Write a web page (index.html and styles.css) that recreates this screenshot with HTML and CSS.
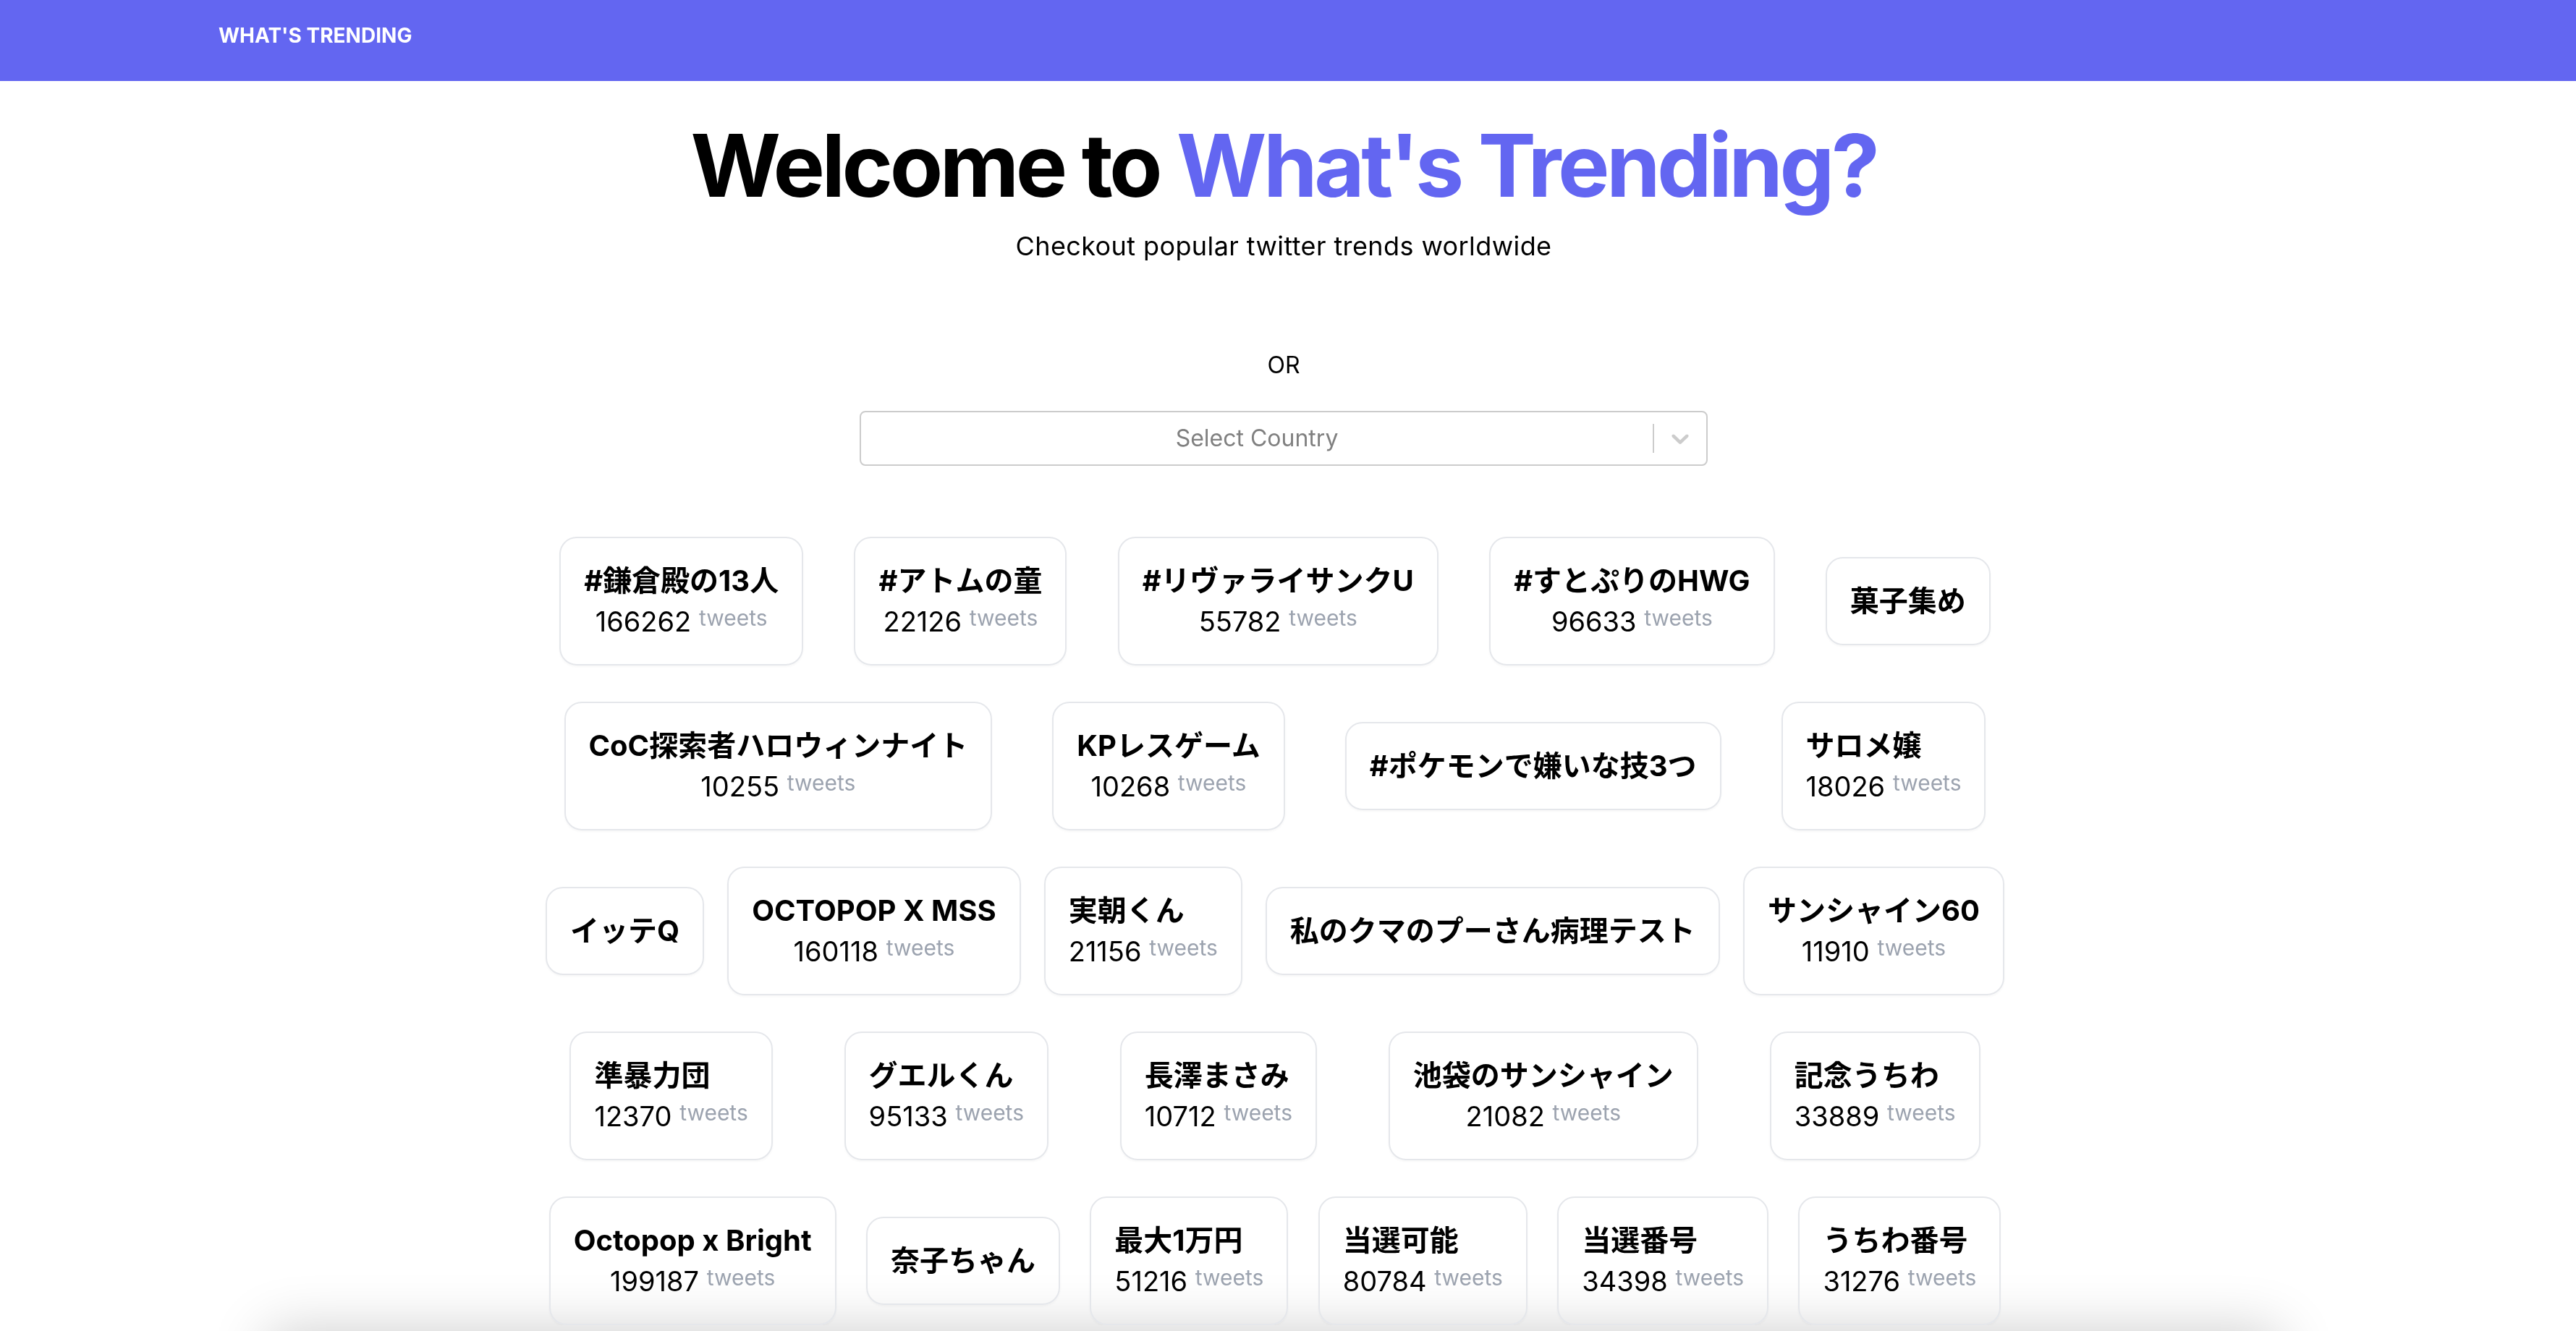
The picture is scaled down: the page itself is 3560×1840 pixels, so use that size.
FILE: index.html
```html
<!DOCTYPE html>
<html lang="ja">
<head>
<meta charset="utf-8">
<title>What's Trending</title>
<link rel="stylesheet" href="styles.css">
</head>
<body>
<header class="topbar">
  <span class="brand">WHAT'S TRENDING</span>
</header>
<main class="main">
  <h1 class="title">Welcome to <span class="accent">What's Trending?</span></h1>
  <p class="subtitle">Checkout popular twitter trends worldwide</p>
  <p class="or">OR</p>
  <div class="select">
    <div class="select-value"><span class="placeholder">Select Country</span></div>
    <div class="select-indicators">
      <span class="sep"></span>
      <span class="chev"><svg viewBox="0 0 20 20" aria-hidden="true"><path d="M4.516 7.548c0.436-0.446 1.043-0.481 1.576 0l3.908 3.747 3.908-3.747c0.533-0.481 1.141-0.446 1.574 0 0.436 0.445 0.408 1.197 0 1.615-0.406 0.418-4.695 4.502-4.695 4.502-0.217 0.223-0.502 0.335-0.787 0.335s-0.57-0.112-0.789-0.335c0 0-4.287-4.084-4.695-4.502s-0.436-1.170 0-1.615z"></path></svg></span>
    </div>
  </div>
  <section class="trends">
    <div class="row">
      <div class="card"><h3 class="card-title">#鎌倉殿の13人</h3><p class="card-count">166262 <span class="card-unit">tweets</span></p></div>
      <div class="card"><h3 class="card-title">#アトムの童</h3><p class="card-count">22126 <span class="card-unit">tweets</span></p></div>
      <div class="card"><h3 class="card-title">#リヴァライサンクU</h3><p class="card-count">55782 <span class="card-unit">tweets</span></p></div>
      <div class="card"><h3 class="card-title">#すとぷりのHWG</h3><p class="card-count">96633 <span class="card-unit">tweets</span></p></div>
      <div class="card"><h3 class="card-title">菓子集め</h3></div>
    </div>
    <div class="row">
      <div class="card"><h3 class="card-title">CoC探索者ハロウィンナイト</h3><p class="card-count">10255 <span class="card-unit">tweets</span></p></div>
      <div class="card"><h3 class="card-title">KPレスゲーム</h3><p class="card-count">10268 <span class="card-unit">tweets</span></p></div>
      <div class="card"><h3 class="card-title">#ポケモンで嫌いな技3つ</h3></div>
      <div class="card"><h3 class="card-title">サロメ嬢</h3><p class="card-count">18026 <span class="card-unit">tweets</span></p></div>
    </div>
    <div class="row">
      <div class="card"><h3 class="card-title">イッテQ</h3></div>
      <div class="card"><h3 class="card-title">OCTOPOP X MSS</h3><p class="card-count">160118 <span class="card-unit">tweets</span></p></div>
      <div class="card"><h3 class="card-title">実朝くん</h3><p class="card-count">21156 <span class="card-unit">tweets</span></p></div>
      <div class="card"><h3 class="card-title">私のクマのプーさん病理テスト</h3></div>
      <div class="card"><h3 class="card-title">サンシャイン60</h3><p class="card-count">11910 <span class="card-unit">tweets</span></p></div>
    </div>
    <div class="row">
      <div class="card"><h3 class="card-title">準暴力団</h3><p class="card-count">12370 <span class="card-unit">tweets</span></p></div>
      <div class="card"><h3 class="card-title">グエルくん</h3><p class="card-count">95133 <span class="card-unit">tweets</span></p></div>
      <div class="card"><h3 class="card-title">長澤まさみ</h3><p class="card-count">10712 <span class="card-unit">tweets</span></p></div>
      <div class="card"><h3 class="card-title">池袋のサンシャイン</h3><p class="card-count">21082 <span class="card-unit">tweets</span></p></div>
      <div class="card"><h3 class="card-title">記念うちわ</h3><p class="card-count">33889 <span class="card-unit">tweets</span></p></div>
    </div>
    <div class="row">
      <div class="card"><h3 class="card-title">Octopop x Bright</h3><p class="card-count">199187 <span class="card-unit">tweets</span></p></div>
      <div class="card"><h3 class="card-title">奈子ちゃん</h3></div>
      <div class="card"><h3 class="card-title">最大1万円</h3><p class="card-count">51216 <span class="card-unit">tweets</span></p></div>
      <div class="card"><h3 class="card-title">当選可能</h3><p class="card-count">80784 <span class="card-unit">tweets</span></p></div>
      <div class="card"><h3 class="card-title">当選番号</h3><p class="card-count">34398 <span class="card-unit">tweets</span></p></div>
      <div class="card"><h3 class="card-title">うちわ番号</h3><p class="card-count">31276 <span class="card-unit">tweets</span></p></div>
    </div>
  </section>
</main>
<div class="fold-shadow"></div>
</body>
</html>
```
FILE: styles.css
```css
html, body {
  margin: 0;
  padding: 0;
}
body {
  background: #ffffff;
  color: #000000;
  font-family: Inter, "Noto Sans CJK JP", sans-serif;
}
.topbar {
  height: 112px;
  box-sizing: border-box;
  background: #6366f1;
  padding: 29px 0 0 302px;
}
.brand {
  display: block;
  color: #ffffff;
  font-weight: 700;
  font-size: 28px;
  line-height: 40px;
}
.main {
  display: flex;
  flex-direction: column;
  align-items: center;
  padding-right: 12px;
}
.title {
  margin: 57px 0 0;
  font-size: 120px;
  line-height: 120px;
  font-weight: 700;
  letter-spacing: -4.5px;
  white-space: nowrap;
}
.accent {
  color: #6366f1;
}
.subtitle {
  margin: 23px 0 0;
  font-size: 36px;
  line-height: 56px;
  letter-spacing: 0.4px;
}
.or {
  margin: 113px 0 0;
  font-size: 32px;
  line-height: 48px;
}
.select {
  margin-top: 39px;
  width: 1172px;
  height: 76px;
  box-sizing: border-box;
  border: 2px solid #cccccc;
  border-radius: 8px;
  display: flex;
  background: #ffffff;
}
.select-value {
  flex: 1;
  display: flex;
  align-items: center;
  justify-content: center;
  padding: 4px 16px;
}
.placeholder {
  color: #808080;
  font-size: 32px;
  line-height: 48px;
}
.select-indicators {
  display: flex;
  align-items: stretch;
}
.sep {
  width: 2px;
  margin: 16px 0;
  background: #cccccc;
}
.chev {
  display: flex;
  align-items: center;
  padding: 16px;
  color: #cccccc;
}
.chev svg {
  width: 40px;
  height: 40px;
  fill: currentColor;
}
.trends {
  width: 2048px;
  margin: 98px 24px 0 0;
  display: flex;
  flex-direction: column;
  gap: 50px;
}
.row {
  display: flex;
  justify-content: space-around;
  align-items: center;
}
.card {
  margin: 0 16px;
  border: 2px solid #e5e7eb;
  border-radius: 24px;
  padding: 31px 32px;
  box-shadow: 0 2px 3px rgba(0, 0, 0, 0.03);
}
.card-title {
  margin: 0;
  font-size: 40px;
  line-height: 56px;
  font-weight: 700;
  white-space: nowrap;
}
.card-count {
  margin: 0;
  text-align: center;
  font-size: 38px;
  line-height: 56px;
  white-space: nowrap;
}
.card-unit {
  font-size: 30px;
  line-height: 28px;
  color: #9ca3af;
  vertical-align: 8px;
}
.fold-shadow {
  position: fixed;
  left: 390px;
  width: 2740px;
  bottom: -230px;
  height: 200px;
  z-index: -1;
  background: #ffffff;
  box-shadow: 0 -10px 80px 20px rgba(0, 0, 0, 0.2);
}
```
